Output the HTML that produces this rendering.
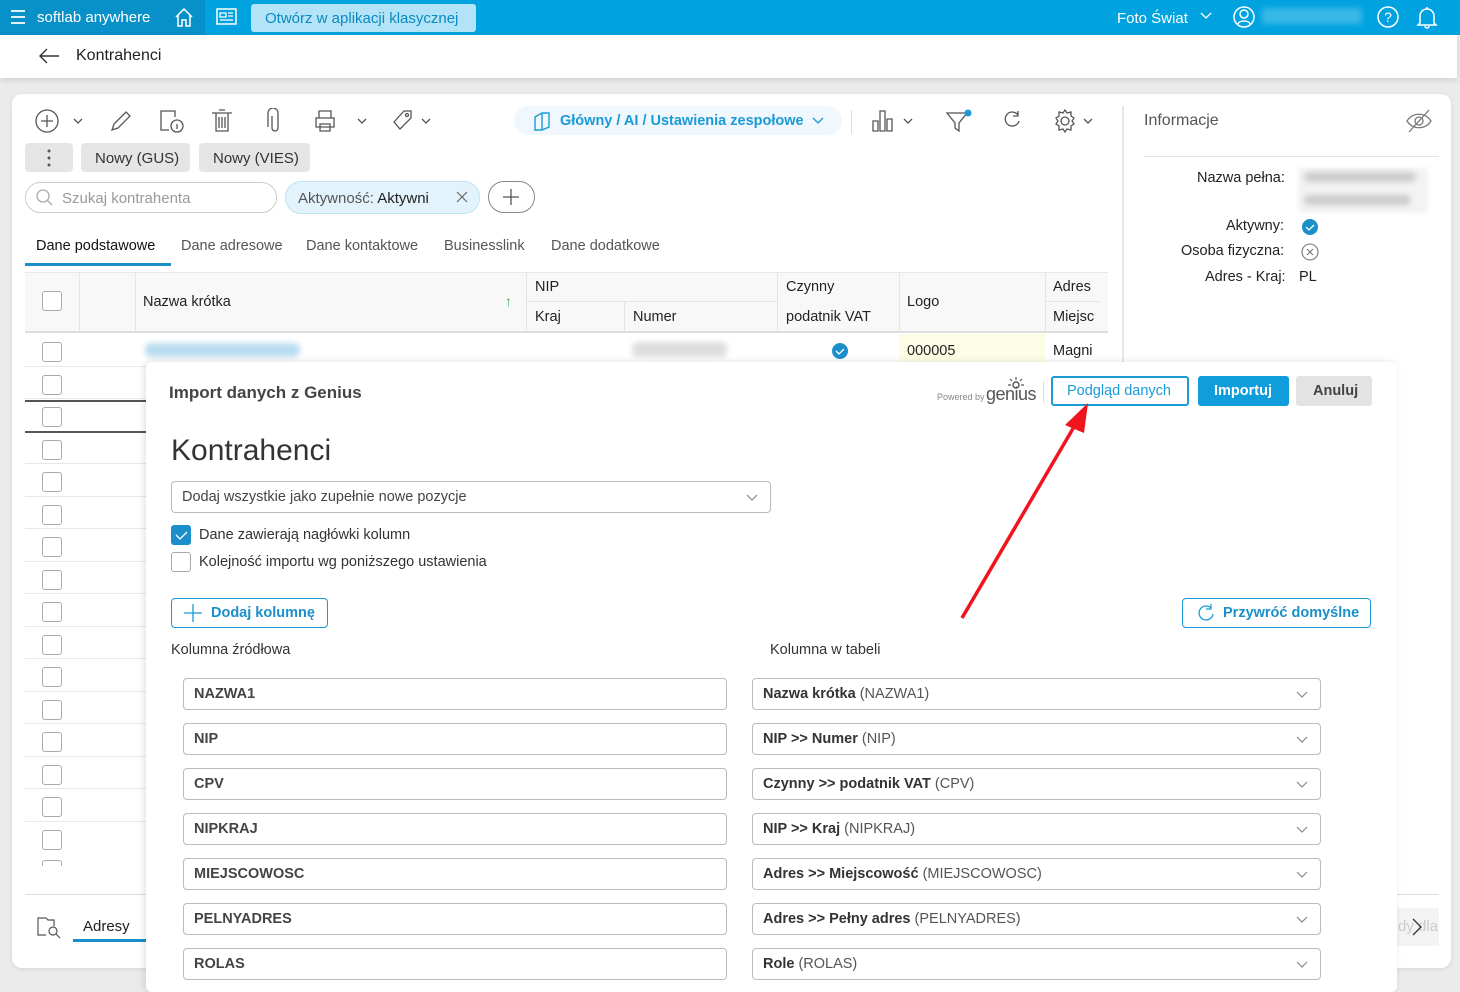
<!DOCTYPE html>
<html><head><meta charset="utf-8"><style>
*{box-sizing:border-box;margin:0;padding:0}
body{width:1460px;height:980px;overflow:hidden;background:#ebebeb;font-family:"Liberation Sans",sans-serif;position:relative;color:#222}
.a{position:absolute}
.t{position:absolute;white-space:nowrap}
.cb{position:absolute;width:20px;height:20px;border:1px solid #aaa;border-radius:3px;background:#fff}
.inp{position:absolute;height:32px;border:1px solid #bbb;border-radius:4px;background:#fff;font-size:14.5px;line-height:30px;padding-left:10px;color:#333}
.chev{position:absolute;right:12px;top:12px}
</style></head><body>
<div class="a" style="left:0;top:0;width:1460px;height:35px;background:#00a3e0"></div>
<div class="a" style="left:0;top:0;width:205px;height:35px;background:#0891c9"></div>
<svg class="a" style="left:10px;top:9px" width="16" height="16"><path d="M1 2h14M1 8h14M1 14h14" stroke="#fff" stroke-width="1.8"/></svg>
<div class="t" style="left:37px;top:9px;color:#fff;font-size:15px">softlab anywhere</div>
<svg class="a" style="left:173px;top:6px" width="22" height="22"><path d="M3 11L11 3l8 8M5 9v11h4v-6h4v6h4V9" fill="none" stroke="#fff" stroke-width="1.5"/></svg>
<svg class="a" style="left:216px;top:8px" width="22" height="18"><rect x="1" y="1" width="19" height="15" fill="none" stroke="#fff" stroke-width="1.5"/><path d="M4 5h6v4H4zM12 5h5M12 8h5M4 12h13" stroke="#fff" stroke-width="1.3" fill="none"/></svg>
<div class="a" style="left:251px;top:4px;width:225px;height:28px;background:#b3e3f6;border-radius:3px"></div>
<div class="t" style="left:265px;top:10px;color:#0a8ac0;font-size:15px">Otwórz w aplikacji klasycznej</div>
<div class="t" style="left:1117px;top:10px;color:#fff;font-size:15px">Foto Świat</div>
<svg class="a" style="left:1200px;top:12px" width="12" height="8"><path d="M1 1l5 5 5-5" fill="none" stroke="#fff" stroke-width="1.3"/></svg>
<svg class="a" style="left:1233px;top:6px" width="22" height="22"><circle cx="11" cy="11" r="10" fill="none" stroke="#fff" stroke-width="1.5"/><circle cx="11" cy="8" r="4" fill="none" stroke="#fff" stroke-width="1.5"/><path d="M5 18c1-4 11-4 12 0" fill="none" stroke="#fff" stroke-width="1.5"/></svg>
<div class="a" style="left:1262px;top:8px;width:100px;height:16px;background:#3ab8e8;border-radius:4px;filter:blur(3px)"></div>
<svg class="a" style="left:1377px;top:6px" width="22" height="22"><circle cx="11" cy="11" r="10" fill="none" stroke="#fff" stroke-width="1.5"/><text x="11" y="16" text-anchor="middle" fill="#fff" font-size="14" font-family="Liberation Sans">?</text></svg>
<svg class="a" style="left:1416px;top:5px" width="22" height="24"><path d="M4 18V11a7 7 0 0 1 14 0v7l2 2H2zM9 21a2 2 0 0 0 4 0M11 2v2" fill="none" stroke="#fff" stroke-width="1.5"/></svg>
<div class="a" style="left:0;top:35px;width:1457px;height:43px;background:#fff;box-shadow:0 2px 6px rgba(0,0,0,.12)"></div>
<svg class="a" style="left:38px;top:47px" width="22" height="18"><path d="M21 9H2M9 2L2 9l7 7" fill="none" stroke="#333" stroke-width="1.4"/></svg>
<div class="t" style="left:76px;top:47px;font-size:16px;color:#222">Kontrahenci</div>
<div class="a" style="left:12px;top:94px;width:1439px;height:874px;background:#fff;border-radius:10px;box-shadow:0 1px 4px rgba(0,0,0,.1)"></div>
<svg class="a" style="left:34px;top:108px" width="420" height="26" fill="none" stroke="#555" stroke-width="1.3">
<circle cx="13" cy="13" r="11"/><path d="M13 7v12M7 13h12"/><path d="M40 11l4 4 4-4"/>
<path d="M78 22l2-6 12-12 4 4-12 12z"/>
<path d="M135 22h-8V3h14v6M127 3"/><circle cx="143" cy="18" r="6"/><path d="M143 16v5"/>
<path d="M178 5h20M182 5v18h12V5M185 2h6M185 9v11M188 9v11M191 9v11"/>
<path d="M238 8v12a3 3 0 0 0 6 0V5a5 5 0 0 0-10 0v14"/>
<path d="M285 10V3h12v7M282 10h18v9h-18zM286 16h10v7h-10z"/><path d="M324 11l4 4 4-4"/>
<path d="M360 14l10-11h7v7L366 21z"/><circle cx="373" cy="7" r="1.5"/><path d="M388 11l4 4 4-4"/>
</svg>
<div class="a" style="left:514px;top:106px;width:328px;height:29px;background:#f1f8fd;border-radius:14px"></div>
<svg class="a" style="left:532px;top:111px" width="20" height="20"><path d="M3 6l7-4h7v14l-7 3H3z M10 2v17" fill="none" stroke="#1a9ad6" stroke-width="1.4"/></svg>
<div class="t" style="left:560px;top:113px;color:#1a9ad6;font-size:14.5px;font-weight:bold">Główny / AI / Ustawienia zespołowe</div>
<svg class="a" style="left:812px;top:117px" width="12" height="8"><path d="M1 1l5 5 5-5" fill="none" stroke="#1a9ad6" stroke-width="1.3"/></svg>
<div class="a" style="left:851px;top:110px;width:1px;height:24px;background:#ddd"></div>
<svg class="a" style="left:870px;top:106px" width="230" height="28" fill="none" stroke="#555" stroke-width="1.3">
<path d="M3 25V15h5v10zM10 25V5h5v20zM17 25V13h5v12z"/><path d="M34 13l4 4 4-4"/>
<path d="M77 7h20l-8 10v8l-4-3v-5z"/><circle cx="98" cy="7" r="3.5" fill="#1a9ad6" stroke="none"/>
<path d="M148 9a7 7 0 1 0 1 6M148 5v5h-5"/>
<circle cx="195" cy="15" r="4"/><path d="M195 4l2 3 4-1 0 4 3 2-2 3 2 3-3 2 0 4-4-1-2 3-2-3-4 1 0-4-3-2 2-3-2-3 3-2 0-4 4 1z"/><path d="M214 13l4 4 4-4"/>
</svg>
<div class="a" style="left:25px;top:143px;width:48px;height:29px;background:#e5e5e5;border-radius:4px"></div>
<svg class="a" style="left:46px;top:148px" width="6" height="20"><circle cx="3" cy="3" r="1.5" fill="#555"/><circle cx="3" cy="10" r="1.5" fill="#555"/><circle cx="3" cy="17" r="1.5" fill="#555"/></svg>
<div class="a" style="left:81px;top:143px;width:109px;height:29px;background:#e5e5e5;border-radius:4px"></div>
<div class="t" style="left:95px;top:150px;font-size:15px;color:#333">Nowy (GUS)</div>
<div class="a" style="left:199px;top:143px;width:111px;height:29px;background:#e5e5e5;border-radius:4px"></div>
<div class="t" style="left:213px;top:150px;font-size:15px;color:#333">Nowy (VIES)</div>
<div class="a" style="left:25px;top:182px;width:252px;height:31px;border:1px solid #ccc;border-radius:16px"></div>
<svg class="a" style="left:36px;top:189px" width="18" height="18"><circle cx="7" cy="7" r="6" fill="none" stroke="#aaa" stroke-width="1.3"/><path d="M11 11l5 5" stroke="#aaa" stroke-width="1.3"/></svg>
<div class="t" style="left:62px;top:190px;font-size:15px;color:#999">Szukaj kontrahenta</div>
<div class="a" style="left:285px;top:181px;width:195px;height:33px;background:#e3f3fb;border:1px solid #bfe3f4;border-radius:16px"></div>
<div class="t" style="left:298px;top:190px;font-size:15px;color:#555">Aktywność: <span style="color:#222">Aktywni</span></div>
<svg class="a" style="left:456px;top:191px" width="12" height="12"><path d="M1 1l10 10M11 1L1 11" stroke="#666" stroke-width="1.2"/></svg>
<div class="a" style="left:488px;top:181px;width:47px;height:32px;border:1px solid #888;border-radius:16px"></div>
<svg class="a" style="left:502px;top:188px" width="18" height="18"><path d="M9 1v16M1 9h16" stroke="#555" stroke-width="1.3"/></svg>
<div class="t" style="left:36px;top:238px;font-size:14.5px;color:#111">Dane podstawowe</div>
<div class="a" style="left:25px;top:263px;width:146px;height:3px;background:#1a8fc9"></div>
<div class="t" style="left:181px;top:238px;font-size:14.5px;color:#555">Dane adresowe</div>
<div class="t" style="left:306px;top:238px;font-size:14.5px;color:#555">Dane kontaktowe</div>
<div class="t" style="left:444px;top:238px;font-size:14.5px;color:#555">Businesslink</div>
<div class="t" style="left:551px;top:238px;font-size:14.5px;color:#555">Dane dodatkowe</div>
<div class="a" style="left:25px;top:272px;width:1083px;height:61px;background:#f8f8f8;border-top:1px solid #e8e8e8;border-bottom:2px solid #ddd"></div>
<div class="a" style="left:79px;top:272px;width:1px;height:60px;background:#e5e5e5"></div>
<div class="a" style="left:135px;top:272px;width:1px;height:60px;background:#e5e5e5"></div>
<div class="a" style="left:526px;top:272px;width:1px;height:60px;background:#e5e5e5"></div>
<div class="a" style="left:624px;top:302px;width:1px;height:30px;background:#e5e5e5"></div>
<div class="a" style="left:526px;top:301px;width:252px;height:1px;background:#e5e5e5"></div>
<div class="a" style="left:777px;top:272px;width:1px;height:60px;background:#e5e5e5"></div>
<div class="a" style="left:899px;top:272px;width:1px;height:60px;background:#e5e5e5"></div>
<div class="a" style="left:1045px;top:272px;width:1px;height:60px;background:#e5e5e5"></div>
<div class="a" style="left:1045px;top:301px;width:55px;height:1px;background:#e5e5e5"></div>
<div class="cb" style="left:42px;top:291px"></div>
<div class="t" style="left:143px;top:294px;font-size:14.5px">Nazwa krótka</div>
<div class="t" style="left:505px;top:293px;font-size:14px;color:#4caf50">↑</div>
<div class="t" style="left:535px;top:279px;font-size:14.5px">NIP</div>
<div class="t" style="left:535px;top:309px;font-size:14.5px">Kraj</div>
<div class="t" style="left:633px;top:309px;font-size:14.5px">Numer</div>
<div class="t" style="left:786px;top:279px;font-size:14.5px">Czynny</div>
<div class="t" style="left:786px;top:309px;font-size:14.5px">podatnik VAT</div>
<div class="t" style="left:907px;top:294px;font-size:14.5px">Logo</div>
<div class="t" style="left:1053px;top:279px;font-size:14.5px">Adres</div>
<div class="t" style="left:1053px;top:309px;font-size:14.5px;width:42px;overflow:hidden">Miejsc</div>
<div class="a" style="left:145px;top:343px;width:155px;height:14px;background:#b9dcf0;border-radius:6px;filter:blur(3px)"></div>
<div class="a" style="left:632px;top:342px;width:95px;height:15px;background:#ddd;border-radius:6px;filter:blur(3px)"></div>
<svg class="a" style="left:831px;top:342px" width="18" height="18"><circle cx="9" cy="9" r="8" fill="#1a8fc9"/><path d="M5 9l3 3 5-5" fill="none" stroke="#fff" stroke-width="1.3"/></svg>
<div class="a" style="left:899px;top:334px;width:146px;height:28px;background:#fdfde6"></div>
<div class="t" style="left:907px;top:343px;font-size:14.5px">000005</div>
<div class="t" style="left:1053px;top:343px;font-size:14.5px">Magni</div>
<div id="rows"></div>
<div class="a" style="left:25px;top:400px;width:121px;height:1.5px;background:#555"></div>
<div class="a" style="left:25px;top:431px;width:121px;height:1.5px;background:#555"></div>
<div class="a" style="left:25px;top:894px;width:1414px;height:1px;background:#ddd"></div>
<svg class="a" style="left:36px;top:915px" width="26" height="24" fill="none" stroke="#555" stroke-width="1.2"><path d="M10 20H2V3h8l2 2h6v6"/><circle cx="17" cy="16" r="4"/><path d="M20 19l4 4"/></svg>
<div class="t" style="left:83px;top:918px;font-size:15px;color:#222">Adresy</div>
<div class="a" style="left:73px;top:939px;width:73px;height:3px;background:#1a8fc9"></div>
<div class="a" style="left:1397px;top:908px;width:42px;height:38px;background:#f3f3f3"></div>
<div class="t" style="left:1398px;top:918px;font-size:15px;color:#ccc">dy dla</div>
<svg class="a" style="left:1411px;top:918px" width="12" height="18"><path d="M2 1l8 8-8 8" fill="none" stroke="#333" stroke-width="1.3"/></svg>
<div class="a" style="left:1122px;top:106px;width:2px;height:256px;background:#e8e8e8"></div>
<div class="t" style="left:1144px;top:112px;font-size:16px;color:#555">Informacje</div>
<svg class="a" style="left:1405px;top:108px" width="28" height="26" fill="none" stroke="#777" stroke-width="1.3"><path d="M2 13c6-9 18-9 24 0-6 9-18 9-24 0z"/><circle cx="14" cy="13" r="4"/><path d="M4 24L24 2"/></svg>
<div class="a" style="left:1144px;top:156px;width:295px;height:1px;background:#e3e3e3"></div>
<div class="t" style="left:1197px;top:170px;font-size:14.5px">Nazwa pełna:</div>
<div class="a" style="left:1298px;top:168px;width:130px;height:45px;background:#f3f3f3;filter:blur(2px)"></div>
<div class="a" style="left:1305px;top:172px;width:110px;height:10px;background:#ccc;filter:blur(3px)"></div>
<div class="a" style="left:1305px;top:195px;width:105px;height:10px;background:#ccc;filter:blur(3px)"></div>
<div class="t" style="left:1226px;top:218px;font-size:14.5px">Aktywny:</div>
<svg class="a" style="left:1301px;top:218px" width="18" height="18"><circle cx="9" cy="9" r="8" fill="#1a8fc9"/><path d="M5 9l3 3 5-5" fill="none" stroke="#fff" stroke-width="1.3"/></svg>
<div class="t" style="left:1181px;top:243px;font-size:14.5px">Osoba fizyczna:</div>
<svg class="a" style="left:1301px;top:243px" width="18" height="18"><circle cx="9" cy="9" r="8" fill="none" stroke="#777" stroke-width="1.1"/><path d="M6 6l6 6M12 6l-6 6" stroke="#777" stroke-width="1.1"/></svg>
<div class="t" style="left:1205px;top:269px;font-size:14.5px">Adres - Kraj:</div>
<div class="t" style="left:1299px;top:269px;font-size:14.5px">PL</div>
<div class="a" style="left:146px;top:362px;width:1251px;height:630px;background:#fff;border-radius:6px;box-shadow:-2px 0 8px rgba(0,0,0,.12)"></div>
<div class="t" style="left:169px;top:383px;font-size:17px;color:#444;font-weight:bold">Import danych z Genius</div>
<div class="t" style="left:937px;top:392px;font-size:9px;color:#888">Powered by</div>
<div class="t" style="left:986px;top:384px;font-size:18px;color:#555;letter-spacing:-0.5px">genius</div>
<svg class="a" style="left:1007px;top:376px" width="18" height="14"><circle cx="9" cy="9" r="3" fill="none" stroke="#555" stroke-width="1.4"/><path d="M9 1v3M3 3l2 2M15 3l-2 2M1 9h3M14 9h3" stroke="#555" stroke-width="1.2"/></svg>
<div class="a" style="left:1043px;top:381px;width:1px;height:22px;background:#ddd"></div>
<div class="a" style="left:1051px;top:376px;width:138px;height:30px;border:2px solid #1a9ad6;border-radius:3px"></div>
<div class="t" style="left:1067px;top:383px;font-size:14.5px;color:#1a9ad6">Podgląd danych</div>
<div class="a" style="left:1198px;top:376px;width:91px;height:30px;background:#0f9ddc;border-radius:3px"></div>
<div class="t" style="left:1214px;top:383px;font-size:14.5px;color:#fff;font-weight:bold">Importuj</div>
<div class="a" style="left:1296px;top:376px;width:76px;height:30px;background:#e3e3e3;border-radius:3px"></div>
<div class="t" style="left:1313px;top:383px;font-size:14.5px;color:#444;font-weight:bold">Anuluj</div>
<div class="t" style="left:171px;top:434px;font-size:30px;color:#333">Kontrahenci</div>
<div class="inp" style="left:171px;top:481px;width:600px;color:#444">Dodaj wszystkie jako zupełnie nowe pozycje<svg class="chev" width="12" height="8"><path d="M1 1l5 5 5-5" fill="none" stroke="#888" stroke-width="1.2"/></svg></div>
<div class="a" style="left:171px;top:525px;width:20px;height:20px;background:#1a8fc9;border-radius:3px"></div>
<svg class="a" style="left:171px;top:525px" width="20" height="20"><path d="M5 10l4 4 7-7" fill="none" stroke="#fff" stroke-width="1.3"/></svg>
<div class="t" style="left:199px;top:527px;font-size:14.5px;color:#333">Dane zawierają nagłówki kolumn</div>
<div class="cb" style="left:171px;top:552px"></div>
<div class="t" style="left:199px;top:554px;font-size:14.5px;color:#333">Kolejność importu wg poniższego ustawienia</div>
<div class="a" style="left:171px;top:598px;width:157px;height:30px;border:1px solid #1a9ad6;border-radius:4px"></div>
<svg class="a" style="left:183px;top:603px" width="20" height="20"><path d="M10 1v18M1 10h18" stroke="#1a9ad6" stroke-width="1.3"/></svg>
<div class="t" style="left:211px;top:605px;font-size:14.5px;color:#1a8fc9;font-weight:bold">Dodaj kolumnę</div>
<div class="a" style="left:1182px;top:598px;width:189px;height:30px;border:1px solid #1a9ad6;border-radius:4px"></div>
<svg class="a" style="left:1196px;top:603px" width="20" height="20"><path d="M15 5a7 7 0 1 0 2 6M15 1v5h-5" fill="none" stroke="#1a9ad6" stroke-width="1.3"/></svg>
<div class="t" style="left:1223px;top:605px;font-size:14.5px;color:#1a8fc9;font-weight:bold">Przywróć domyślne</div>
<div class="t" style="left:171px;top:642px;font-size:14.5px;color:#333">Kolumna źródłowa</div>
<div class="t" style="left:770px;top:642px;font-size:14.5px;color:#333">Kolumna w tabeli</div>
<div id="map"></div>
<svg class="a" style="left:0;top:0" width="1460" height="980"><path d="M962 618L1078 420" stroke="#f0141c" stroke-width="3.5"/><path d="M1088 403L1065 425L1084 433z" fill="#f0141c"/></svg>
<script>
var r='';var ys=[350,383,415,448,480,513,545,578,610,643,675,708,740,773,805,838];
ys.forEach(function(y,i){r+='<div class="cb" style="left:42px;top:'+(y-8)+'px"></div>';if(i>0)r+='<div class="a" style="left:25px;top:'+(y-17)+'px;width:121px;height:1px;background:#e8e8e8"></div>';});
r+='<div class="a" style="left:42px;top:860px;width:20px;height:6px;border:1px solid #aaa;border-bottom:none;border-radius:3px 3px 0 0"></div>';
document.getElementById('rows').innerHTML=r;
var m=[['NAZWA1','Nazwa krótka','NAZWA1'],['NIP','NIP &gt;&gt; Numer','NIP'],['CPV','Czynny &gt;&gt; podatnik VAT','CPV'],['NIPKRAJ','NIP &gt;&gt; Kraj','NIPKRAJ'],['MIEJSCOWOSC','Adres &gt;&gt; Miejscowość','MIEJSCOWOSC'],['PELNYADRES','Adres &gt;&gt; Pełny adres','PELNYADRES'],['ROLAS','Role','ROLAS']];
var s='';m.forEach(function(x,i){var y=678+i*45;
s+='<div class="inp" style="left:183px;top:'+y+'px;width:544px;font-weight:bold;color:#444">'+x[0]+'</div>';
s+='<div class="inp" style="left:752px;top:'+y+'px;width:569px;color:#555"><b style="color:#333">'+x[1]+'</b> ('+x[2]+')<svg class="chev" width="12" height="8"><path d="M1 1l5 5 5-5" fill="none" stroke="#888" stroke-width="1.2"/></svg></div>';});
document.getElementById('map').innerHTML=s;
</script>
</body></html>
